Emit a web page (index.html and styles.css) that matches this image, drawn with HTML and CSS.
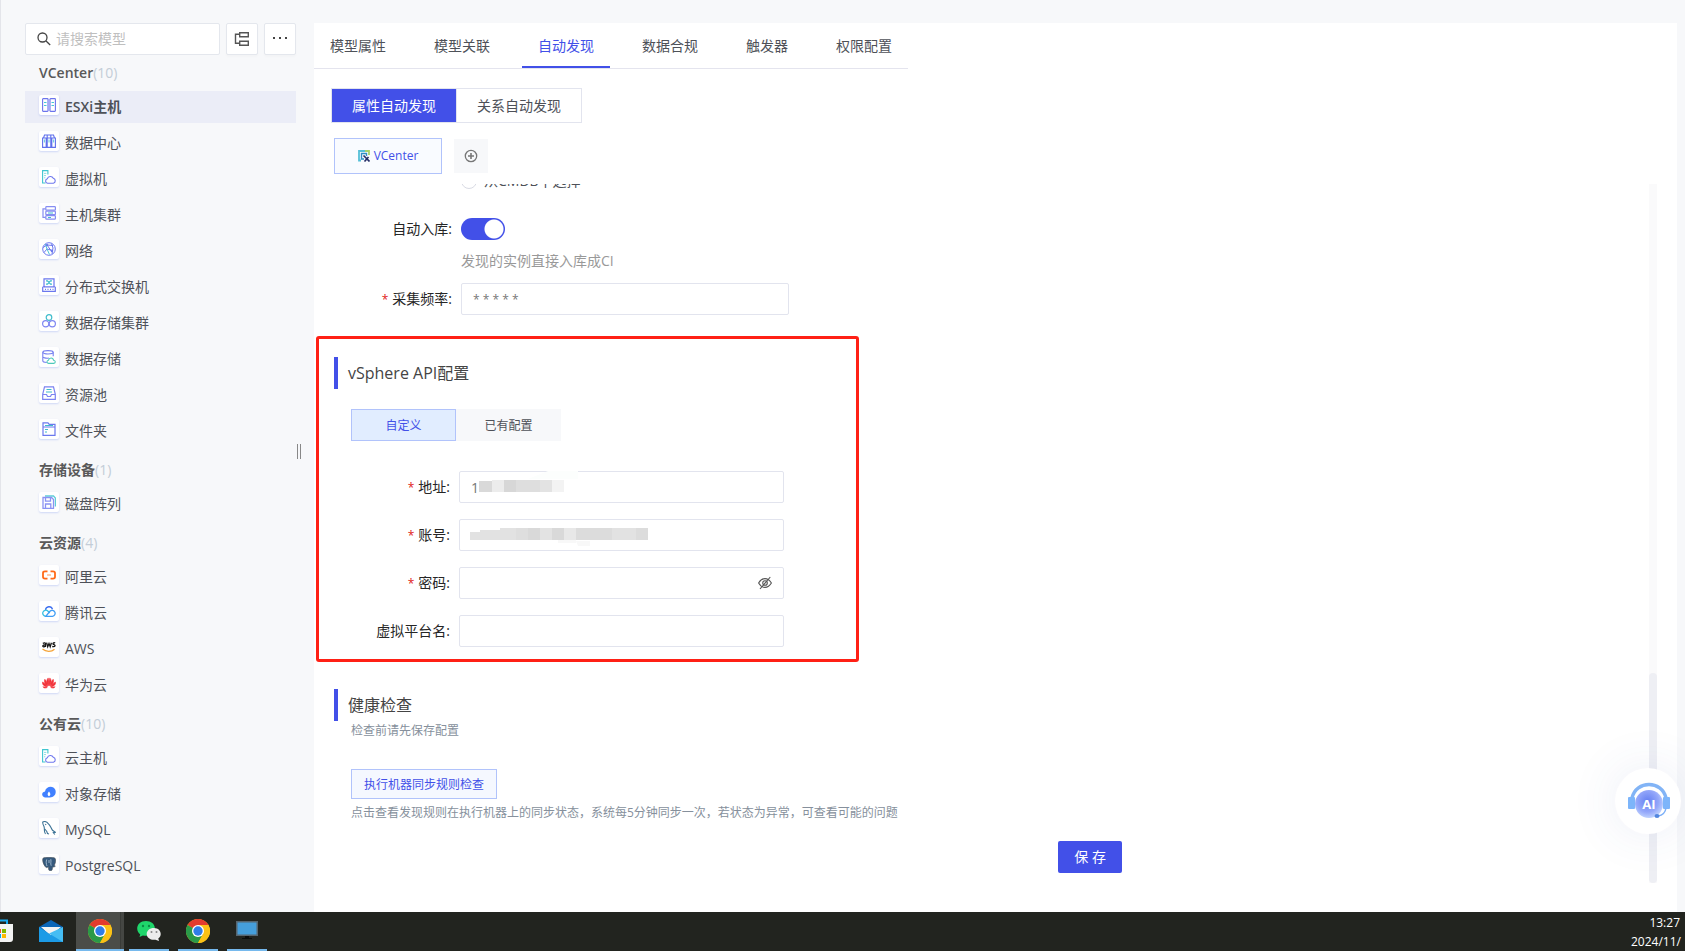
FILE: index.html
```html
<!DOCTYPE html>
<html lang="zh-CN">
<head>
<meta charset="utf-8">
<title>模型配置 - 自动发现</title>
<link rel="stylesheet" href="styles.css">
</head>
<body>
<svg class="defs" aria-hidden="true">
  <defs>
    <symbol id="cloud-host" viewBox="0 0 14 14"><path d="M3.5 13H.6V.6h5.3v4" fill="none" stroke="#3fc5d0" stroke-width="1.1"/><path d="M2 3.4h2.4M2 5.6h2M2 7.8h1.4" stroke="#8fdce2" fill="none"/><path d="M5.6 13.3a2.3 2.3 0 0 1-.3-4.5A3.2 3.2 0 0 1 11.3 8.3a2.6 2.6 0 0 1 .1 5z" fill="#fff" stroke="#6f78ee" stroke-width="1.1"/></symbol>
    <symbol id="chrome" viewBox="0 0 24 24"><circle cx="12" cy="12" r="12" fill="#fbc116"/><path d="M12 12 1.600 6A12 12 0 0 1 22.400 6z" fill="#e33b2e"/><path d="M1.600 6A12 12 0 0 0 12 24l5-9-5-3z" fill="#2a9a48"/><path d="M12 6h10.400A12 12 0 0 1 12 24l5.200-9z" fill="#fbc116"/><circle cx="12" cy="12" r="6" fill="#fff"/><circle cx="12" cy="12" r="4.700" fill="#2f7de9"/></symbol>
  </defs>
</svg>
<div class="app">
  <aside class="sidebar">
    <div class="toolbar">
      <label class="search">
        <svg width="14" height="14" viewBox="0 0 14 14" fill="none" stroke="#444" stroke-width="1.3"><circle cx="5.500" cy="5.500" r="4.500"/><path d="m8.800 8.800 4.400 4.200"/></svg>
        <input type="text" placeholder="请搜索模型" aria-label="搜索模型">
      </label>
      <button class="tool" aria-label="树形视图"><svg width="16" height="16" viewBox="0 0 16 16" fill="none" stroke="#555" stroke-width="1.400"><path d="M5.700 1.700h8.600v4H5.700zM5.700 10.200h8.600v4H5.700zM5.700 3.200H1.500v9h4.200"/></svg></button>
      <button class="tool" aria-label="更多"><svg width="16" height="16" viewBox="0 0 16 16" fill="#444"><path d="M1 6h2v2H1zM7 6h2v2H7zM13 6h2v2h-2z"/></svg></button>
    </div>
    <nav class="groups">
      <section class="group">
        <h3 class="group-title">VCenter<span>(10)</span></h3>
        <a href="#" class="item current"><i class="tile"><svg viewBox="0 0 14 14" fill="none" stroke="#6c74ec" stroke-width="1.100"><rect x=".6" y=".6" width="5.400" height="12.800" rx=".6"/><rect x="8" y=".6" width="5.400" height="12.800" rx=".6"/><path d="M7 1v12" stroke="#a3a8f5" stroke-width="2"/><path d="M2 4.500h2.500M2 7.500h2.500M9.500 4.500H12M9.500 7.500H12" stroke="#45c8d4"/></svg></i>ESXi主机</a>
        <a href="#" class="item"><i class="tile"><svg viewBox="0 0 14 14" fill="none" stroke="#5f70ec" stroke-width="1.100"><path d="M.6 4h3.600v9.400H.6zM5.200 4h3.600v9.400H5.200zM9.800 4h3.600v9.400H9.800zM1.500 4l1-3h9l1 3M5.200 4V1M8.800 4V1"/><path d="M2.400 5.500v3M7 5.500v3M11.600 5.500v3" stroke="#6bcde0"/></svg></i>数据中心</a>
        <a href="#" class="item"><i class="tile"><svg><use href="#cloud-host"/></svg></i>虚拟机</a>
        <a href="#" class="item"><i class="tile"><svg viewBox="0 0 14 14" fill="none" stroke="#858df2" stroke-width="1.200"><rect x="3.800" y=".7" width="9.600" height="3.500" rx=".8"/><rect x="3.800" y="5.200" width="9.600" height="3.500" rx=".8"/><rect x="3.800" y="9.700" width="9.600" height="3.500" rx=".8"/><path d="M3.500 2.800H1v8.500h2.500"/><path d="M6 7h5M6 11.500h3" stroke="#40bccb"/></svg></i>主机集群</a>
        <a href="#" class="item"><i class="tile"><svg viewBox="0 0 14 14" fill="none" stroke="#6b78ee" stroke-width="1"><circle cx="7" cy="7" r="6.300"/><path d="M1 5.500 5 3l6 .5M5 3l5 7M2 10.500l3-3.500 6 1.500M9.500 1.500 11 6l-1 6"/><path d="M3.500 2 5 7l2.500 5.500" stroke="#4ac3d4"/><circle cx="5" cy="3" r=".8" fill="#6b78ee"/><circle cx="10" cy="9" r=".8" fill="#6b78ee"/></svg></i>网络</a>
        <a href="#" class="item"><i class="tile"><svg viewBox="0 0 14 14" fill="none" stroke="#6b78ee" stroke-width="1.200"><path d="M2 8.500V.8h10v7.700M2 8.500l-1.300.8v4h12.600v-4L12 8.500M2 8.800h10M3 11.300h1M5.500 11.300h1M8 11.300h1M10.500 11.300h1"/><path d="M4 2.800h1.500l3 3.400H10M4 6.200h1.500l3-3.400H10" stroke="#3fbccc"/></svg></i>分布式交换机</a>
        <a href="#" class="item"><i class="tile"><svg viewBox="0 0 14 14" fill="none" stroke="#7f87f2" stroke-width="1.200"><circle cx="7" cy="3.500" r="2.800" stroke="#3fbccc"/><circle cx="3.700" cy="9.800" r="3.100"/><circle cx="10.300" cy="9.800" r="3.100"/></svg></i>数据存储集群</a>
        <a href="#" class="item"><i class="tile"><svg viewBox="0 0 14 14" fill="none" stroke="#7780f0" stroke-width="1.100"><ellipse cx="6" cy="2.300" rx="5.200" ry="1.700"/><path d="M.8 2.300v8.500c0 1 2 1.700 4 1.700M11.200 2.300v4M.8 6.500c0 1.200 3 2 6 1.600"/><path d="M6.500 13.400c-2-.1-2-3 0-3.200.6-3 4.600-3 5 0 2.300.2 2.300 3 .3 3.200z" fill="#fff" stroke="#4fcabb"/></svg></i>数据存储</a>
        <a href="#" class="item"><i class="tile"><svg viewBox="0 0 14 14" fill="none" stroke="#7b83f1" stroke-width="1.200"><path d="M.7 8.300 2.500.8h9l1.800 7.500v5H.7zM.7 8.500h3.800l1 2h3l1-2h3.800"/><path d="M4.500 3.500h5M4 6h6" stroke="#3fbccc"/></svg></i>资源池</a>
        <a href="#" class="item"><i class="tile"><svg viewBox="0 0 14 14" fill="none" stroke="#6b78ee" stroke-width="1.200"><path d="M1 .8h5l1.200 1.500H13v11H1zM1 5h12"/><path d="M3 3.500h8M3 7.500h3M3 10h2" stroke="#3fbccc"/></svg></i>文件夹</a>
      </section>
      <section class="group">
        <h3 class="group-title">存储设备<span>(1)</span></h3>
        <a href="#" class="item"><i class="tile"><svg viewBox="0 0 14 14" fill="none" stroke="#8a92f3" stroke-width="1.300"><path d="M3 1h8.500L13.400 3v8.500" stroke="#5fcbd8"/><path d="M1 2.500h8.500l2 2v8.800H1zM3.500 2.500v3.600h5V2.500M3.500 13V9h5.300v4"/></svg></i>磁盘阵列</a>
      </section>
      <section class="group">
        <h3 class="group-title">云资源<span>(4)</span></h3>
        <a href="#" class="item"><i class="tile"><svg viewBox="0 0 14 14" fill="none" stroke="#ff6a1a" stroke-width="1.800"><path d="M5.500 3.300H3Q1 3.300 1 5v3.800q0 1.800 2 1.800h2.500M8.500 3.300H11q2 0 2 1.700v3.800q0 1.800-2 1.800H8.500"/><path d="M5 7h4" stroke="#ffc6a5"/></svg></i>阿里云</a>
        <a href="#" class="item"><i class="tile"><svg viewBox="0 0 14 14" fill="none" stroke="#3f9df5" stroke-width="1.300"><path d="M3.500 6a3.600 3.600 0 0 1 7-.8" stroke="#3d6ef0"/><path d="M3.800 12.200a3 3 0 1 1 2-5.200l2 2" stroke="#35bfe0"/><path d="M3.800 12.300h6.700a3 3 0 1 0-2.600-5z"/></svg></i>腾讯云</a>
        <a href="#" class="item"><i class="tile"><svg viewBox="0 0 14 14" fill="none" stroke="#151515" stroke-width="1.300"><path d="M.8 3.300q2.700-1 2.700.7v3M3.300 5C.5 4.600.2 6.800 1.700 6.800q1 0 1.800-1M4.600 2.700l1.100 4L7 3.500l1.200 3.200 1.200-4M13.200 3c-1.500-.7-3 .3-1.700 1.400 2.500.8 1.800 2.900-1.300 2.100"/><path d="M.5 9c3.500 3 9 3 12 .2" stroke="#f5a43a"/></svg></i>AWS</a>
        <a href="#" class="item"><i class="tile"><svg viewBox="0 0 14 14" fill="#f2333a"><path d="M6.700 9.800C4.500 7 4.300 3.500 6.200 1.900c.8 1.800.9 4.700.5 7.900zM7.300 9.800c2.200-2.800 2.400-6.300.5-7.900-.8 1.800-.9 4.700-.5 7.900zM6 10.200C3 8.500 1.600 5.500 2.800 3.200 4.500 4.700 5.500 7.400 6 10.200zM8 10.200c3-1.700 4.400-4.700 3.200-7C9.500 4.700 8.500 7.400 8 10.200zM5.400 10.900C2.300 10.700 0 8.600.4 6c2 .8 3.800 2.700 5 4.900zM8.600 10.900c3.100-.2 5.400-2.300 5-4.900-2 .8-3.800 2.700-5 4.900zM5.200 11.500c-1.800 1-3.500.8-4.300-.8zM8.800 11.500c1.800 1 3.500.8 4.300-.8z" stroke="#f2333a" stroke-width=".5"/></svg></i>华为云</a>
      </section>
      <section class="group">
        <h3 class="group-title">公有云<span>(10)</span></h3>
        <a href="#" class="item"><i class="tile"><svg><use href="#cloud-host"/></svg></i>云主机</a>
        <a href="#" class="item"><i class="tile"><svg viewBox="0 0 14 14"><path d="M3 12.400C-.6 12-1 7 3 6.400 4 1 11.500.3 13.300 4.800c1.500 4-1.300 7.600-5.300 7.600z" fill="#4080ff"/><path d="M7 6.500c-2 2.300-1.500 4 0 4.700 1.600-.7 2-2.400 0-4.700z" fill="#fff"/></svg></i>对象存储</a>
        <a href="#" class="item"><i class="tile"><svg viewBox="0 0 14 14" fill="none" stroke="#3d7396" stroke-width="1.100"><path d="M3.500 13C1.500 10.500 3 8.500 2 5.500 1 3.500.4 2 .8 1 3-.2 5 1 6.500 2.800c2 2 2.500 4.500 4 6.500l2.800 2-2 .4 1.500 1.800M3.300 3l.8 1M2.800 8l2 2.500.7 2 1.500.5"/></svg></i>MySQL</a>
        <a href="#" class="item"><i class="tile"><svg viewBox="0 0 14 14"><path d="M1 1.200C3-.2 11-.2 13 1.200c1.400 2 .4 5-.8 7.300l1.200.5c-.7 1-1.700 1.200-2.800 1-.3 2 0 3.600-2 3.800-1.800.2-2.200-1-2.200-4-1.300 1.200-2.500 1-3.200-.2C1.200 7 0 3 1 1.200z" fill="#35597c" stroke="#4a5158" stroke-width=".6"/><path d="M4.700 2.500c-.8 2-.6 4.500.3 6.500M8.800 2.200c.6 3-.6 4 .4 6.500M7 3v3" fill="none" stroke="#a9c0d4" stroke-width=".9"/></svg></i>PostgreSQL</a>
      </section>
    </nav>
    <div class="splitter" role="separator" aria-orientation="vertical"></div>
  </aside>

  <main class="panel">
    <nav class="tabs">
      <a href="#">模型属性</a><a href="#">模型关联</a><a href="#" class="active">自动发现</a><a href="#">数据合规</a><a href="#">触发器</a><a href="#">权限配置</a>
    </nav>
    <div class="segment">
      <button class="on">属性自动发现</button><button>关系自动发现</button>
    </div>
    <div class="sources">
      <button class="source"><svg width="12" height="12" viewBox="0 0 12 12" fill="none"><path d="M3 10.500H1V1h7" stroke="#55bfd8" stroke-width="1.800"/><path d="M7 1h4v4" stroke="#a7d36c" stroke-width="1.800"/><path d="M6 9H3.500V3.500h5V6" stroke="#2f8fc4" stroke-width="1.400"/><path d="m5.500 5.500 6 6M10.500 7l-4 4.500" stroke="#232c66" stroke-width="1.600"/></svg>VCenter</button>
      <button class="add" aria-label="新增"><svg width="14" height="14" viewBox="0 0 14 14" fill="none" stroke="#777"><circle cx="7" cy="7" r="5.700" stroke-width="1.300"/><path d="M7 4v6M4 7h6" stroke-width="1.600"/></svg></button>
    </div>

    <div class="scroll">
      <form class="content">
        <div class="row first">
          <span></span>
          <label class="radio"><input type="radio" name="target">从CMDB中选择</label>
        </div>
        <div class="row switch-row">
          <label class="name" for="auto">自动入库:</label>
          <input class="switch" type="checkbox" id="auto" checked>
        </div>
        <div class="row hint-row"><span></span><p class="hint">发现的实例直接入库成CI</p></div>
        <div class="row freq-row">
          <label class="name required" for="freq">采集频率:</label>
          <input class="field cron" id="freq" type="text" value="* * * * *">
        </div>

        <section class="section api">
          <h2>vSphere API配置</h2>
          <div class="modes"><button type="button" class="on">自定义</button><button type="button">已有配置</button></div>
          <div class="fields">
            <div class="row"><label class="name required" for="host">地址:</label>
              <div class="wrap"><input class="field" id="host" type="text" value="1">
                <svg class="mask" width="120" height="32" viewBox="0 0 120 32"><path d="M89 0h30v8H69z" fill="#fcfefd"/><path d="M20 10h13v11H20z" fill="#d9d9d9"/><path d="M33 9h12v12H33z" fill="#ececec"/><path d="M45 9h12v12H45z" fill="#d7d7d7"/><path d="M57 9h24v12H57z" fill="#dedede"/><path d="M81 9h12v12H81z" fill="#e3e3e3"/><path d="M93 9h12v12H93z" fill="#f3f3f3"/></svg></div></div>
            <div class="row"><label class="name required" for="user">账号:</label>
              <div class="wrap"><input class="field" id="user" type="text">
                <svg class="mask" width="200" height="32" viewBox="0 0 200 32"><path d="M11 13h10v-2h20V9h16v12H11z" fill="#e2e2e2"/><path d="M57 9h12v12H57z" fill="#dedede"/><path d="M69 9h12v12H69z" fill="#d9d9d9"/><path d="M81 9h12v12H81z" fill="#e3e3e3"/><path d="M93 9h12v12H93z" fill="#d9d9d9"/><path d="M105 9h12v12h-12z" fill="#e8e8e8"/><path d="M117 9h36v12h-36z" fill="#dcdcdc"/><path d="M153 9h24v12h-24z" fill="#e2e2e2"/><path d="M177 9h12v12h-12z" fill="#dcdcdc"/><path d="M99 21h18v3H99zM117 22h14v5h-12z" fill="#f8f8f8"/></svg></div></div>
            <div class="row"><label class="name required" for="pass">密码:</label>
              <div class="wrap"><input class="field" id="pass" type="password">
                <button type="button" class="eye" aria-label="显示密码"><svg width="14" height="14" viewBox="0 0 14 14" fill="none" stroke="#555" stroke-width="1.100"><path d="M.6 7Q3.200 2.600 7 2.600T13.400 7Q10.800 11.400 7 11.400T.6 7z"/><circle cx="7" cy="7" r="2.300"/><path d="M12.300 1 2 13"/></svg></button></div></div>
            <div class="row"><label class="name" for="platform">虚拟平台名:</label>
              <div class="wrap"><input class="field" id="platform" type="text"></div></div>
          </div>
          <div class="callout"></div>
        </section>

        <section class="section">
          <h2>健康检查</h2>
          <p class="note">检查前请先保存配置</p>
          <button type="button" class="check">执行机器同步规则检查</button>
          <p class="note">点击查看发现规则在执行机器上的同步状态，系统每5分钟同步一次，若状态为异常，可查看可能的问题</p>
        </section>
        <div class="actions"><button class="save">保 存</button></div>
      </form>
      <div class="track"><div class="thumb"></div></div>
    </div>
  </main>

  <button class="assistant" aria-label="AI 助手">
    <svg width="44" height="44" viewBox="0 0 44 44">
      <defs><radialGradient id="orb" cx=".45" cy=".4" r=".65"><stop offset="0" stop-color="#6580f2"/><stop offset=".6" stop-color="#94a7fa"/><stop offset="1" stop-color="#c9dcff"/></radialGradient></defs>
      <circle cx="23" cy="25" r="14" fill="url(#orb)"/>
      <path d="M6 19C10 1 36 1 40 19" fill="none" stroke="#82b4f6" stroke-width="3.500"/>
      <rect x="2" y="18" width="7" height="12" rx="1" fill="#7db5fa"/><rect x="37" y="18" width="7" height="12" rx="1" fill="#7db5fa"/>
      <path d="M40 29q-1 7-8 8" fill="none" stroke="#7db0f8" stroke-width="1.500"/><ellipse cx="31" cy="37" rx="2.500" ry="2" fill="#5387df"/>
      <text x="23" y="30" text-anchor="middle" class="ai-text">AI</text>
    </svg>
  </button>
</div>

<footer class="taskbar">
  <button class="task store" aria-label="应用商店"><svg width="13" height="24" viewBox="0 0 13 24"><path d="M0 1.500h7V7" fill="none" stroke="#19a7ee" stroke-width="2"/><path d="M0 5h13v15q0 3-3 3H0z" fill="#f3f3f3"/><path d="M2 10h4v4H2z" fill="#7fba00"/><path d="M0 10h1v4H0z" fill="#f25022"/><path d="M2 15h4v4H2z" fill="#ffb900"/><path d="M0 15h1v4H0z" fill="#00a4ef"/></svg></button>
  <button class="task mail" aria-label="邮件"><svg width="24" height="24" viewBox="0 0 24 24"><path d="M0 8 12 1l12 7v6H0z" fill="#0b66b8"/><path d="M2 8h20l-10 9z" fill="#f3f3f3"/><path d="M0 8l12 8 12-8v15H0z" fill="#1c9be6"/><path d="M24 8v15L10 14.500z" fill="#45bdf3"/></svg></button>
  <button class="task open focus" aria-label="Chrome"><svg width="24" height="24"><use href="#chrome"/></svg></button>
  <button class="task open" aria-label="微信"><svg width="24" height="24" viewBox="0 0 24 24"><path d="M9 2C3.500 2 .2 5.500.2 9.500c0 2.500 1.200 4.500 3 5.700L2.500 18l3.400-1.600c5 1.600 12-1 12-7C17.900 5 14 2 9 2z" fill="#1fd66b"/><circle cx="6" cy="7" r="1.200" fill="#0b8f45"/><circle cx="12" cy="7" r="1.200" fill="#0b8f45"/><path d="M17 9c-4.500 0-7.300 2.700-7.300 6s3.300 6.400 8.800 5.800L22 22l-.7-2.500C26 16 23.500 9 17 9z" fill="#ececec"/><circle cx="14.500" cy="13" r="1" fill="#888"/><circle cx="19.500" cy="13" r="1" fill="#888"/></svg></button>
  <button class="task open" aria-label="Chrome"><svg width="24" height="24"><use href="#chrome"/></svg></button>
  <button class="task open" aria-label="远程桌面"><svg width="24" height="24" viewBox="0 0 24 24"><path d="M1 2h22v15H1z" fill="#56656f"/><path d="M2.500 3.500h19v12h-19z" fill="#459edb"/><path d="M10 17h4v2h3v1H7v-1h3z" fill="#0c0d0c"/></svg></button>
  <div class="clock"><time>13:27</time><span>2024/11/</span></div>
</footer>
</body>
</html>
```
FILE: styles.css
```css
* { box-sizing: border-box; }
body {
  margin: 0;
  height: 100vh;
  display: flex;
  flex-direction: column;
  overflow: hidden;
  background: #f7f8fa;
  color: #4e5158;
  font: 14px/22px "Open Sans", "Noto Sans CJK SC", sans-serif;
}
button, input { font: inherit; color: inherit; margin: 0; }
button { cursor: pointer; padding: 0; border: 0; background: none; }
a { color: inherit; text-decoration: none; }
p, h2, h3 { margin: 0; }
.defs { position: absolute; width: 0; height: 0; }

.app { flex: 1; min-height: 0; display: flex; padding-right: 8px; position: relative; border-left: 1px solid #e4e5ea; }

/* Sidebar */
.sidebar { flex: none; width: 313px; padding: 23px 18px 0 24px; position: relative; }
.toolbar { display: flex; gap: 6px; }
.search {
  flex: 1; min-width: 0; height: 32px; display: flex; align-items: center; gap: 5px;
  padding: 0 11px; background: #fff; border: 1px solid #e4e7ed; border-radius: 2px;
}
.search input { flex: 1; min-width: 0; border: 0; outline: 0; padding: 0; background: none; }
.search input::placeholder { color: #bfbfbf; }
.tool {
  width: 32px; height: 32px; display: grid; place-items: center; background: #fff;
  border: 1px solid #e4e7ed; border-radius: 2px; box-shadow: 0 2px 2px rgba(0, 0, 0, .02);
}
.groups { display: flex; flex-direction: column; gap: 5px; }
.group { display: flex; flex-direction: column; gap: 4px; }
.group-title { height: 32px; padding: 7px 0 0 14px; font-size: 14px; line-height: 22px; font-weight: 600; color: #595959; }
.group-title span { color: #c3cdd7; font-weight: 400; }
.item { height: 32px; padding-left: 14px; display: flex; align-items: center; gap: 6px; }
.item.current { background: #ebedf7; font-weight: 600; }
.tile {
  width: 20px; height: 20px; margin-bottom: 4px; display: grid; place-items: center; background: #fff;
  border-radius: 2px; box-shadow: 0 1px 2px rgba(47, 84, 235, .2);
}
.tile svg { width: 14px; height: 14px; }
.splitter {
  position: absolute; right: 13px; top: 444px; width: 4px; height: 15px;
  border: solid #888; border-width: 0 1px;
}

/* Main panel */
.panel { flex: 1; min-width: 0; margin-top: 23px; background: #fff; display: flex; flex-direction: column; }
.tabs { align-self: flex-start; display: flex; gap: 16px; border-bottom: 1px solid #e4e4ee; }
.tabs a { height: 45px; padding: 12px 16px 0; }
.tabs .active { color: #4250e8; border-bottom: 2px solid #4250e8; }
.segment { align-self: flex-start; margin: 19px 0 0 17px; display: flex; border: 1px solid #e2e4ee; }
.segment button { height: 33px; padding: 0 20px; }
.segment .on { background: #4250e8; color: #fff; }
.segment button + button { border-left: 1px solid #e2e4ee; }
.sources { display: flex; align-items: center; gap: 12px; margin: 15px 0 0 20px; }
.source {
  width: 108px; height: 36px; display: flex; align-items: center; justify-content: center; gap: 4px;
  border: 1px solid #b1c3fb; background: #f9fbff; color: #4250e8; font-size: 12px;
}
.add { width: 34px; height: 34px; display: grid; place-items: center; background: #f7f8fa; }

.scroll { flex: 1; min-height: 0; margin-top: 10px; display: flex; overflow: hidden; }
.content { flex: 1; min-width: 0; padding-left: 20px; }
.row { display: grid; grid-template-columns: 127px minmax(0, 328px); align-items: center; }
.first { margin-top: -14px; }
.radio { display: flex; align-items: center; gap: 7px; }
.radio input { appearance: none; width: 16px; height: 16px; border: 1px solid #d9dbe4; border-radius: 50%; }
.name { padding-right: 9px; text-align: right; color: #262626; }
.required::before { content: "*"; color: #e02020; font-size: 12px; margin-right: 4px; }
.switch-row { margin-top: 26px; }
.switch {
  appearance: none; width: 44px; height: 22px; border-radius: 11px;
  background: radial-gradient(circle at 33px 11px, #fff 9px, #4250e8 10px);
}
.hint-row { margin-top: 10px; }
.hint { color: #999; }
.freq-row { margin-top: 11px; }
.field { display: block; width: 100%; height: 32px; padding: 0 11px; border: 1px solid #e2e4ee; border-radius: 2px; outline: 0; background: #fff; color: #777; }
.cron { font-size: 12px; }

.section { margin-top: 42px; }
.section h2 { height: 32px; padding-left: 10px; border-left: 4px solid #4250e8; font-size: 16px; line-height: 32px; font-weight: 400; color: #444; }
.api { position: relative; max-width: 525px; }
.modes { display: flex; margin: 20px 0 0 17px; }
.modes button { width: 105px; height: 32px; padding-top: 2px; font-size: 12px; background: #f7f8fa; }
.modes .on { background: #e1edff; border: 1px solid #b1c3fb; color: #4250e8; }
.fields { margin-top: 30px; display: flex; flex-direction: column; gap: 16px; }
.fields .row { grid-template-columns: 125px minmax(0, 325px); }
.wrap { position: relative; }
.mask { position: absolute; left: 0; top: 0; }
.eye { position: absolute; right: 12px; top: 9px; width: 14px; height: 14px; display: grid; }
.callout { position: absolute; inset: -21px 0 -15px -18px; border: 3px solid #ff2015; border-radius: 3px; pointer-events: none; }

.note { padding-left: 17px; font-size: 12px; line-height: 20px; color: #86909c; }
.check { height: 30px; margin: 28px 0 4px 17px; padding: 2px 12px 0; font-size: 12px; border: 1px solid #b1c3fb; background: #f5f8ff; color: #4250e8; }
.actions { margin-top: 18px; padding-left: 15%; display: flex; justify-content: center; }
.save { width: 64px; height: 32px; border-radius: 2px; background: #4250e8; color: #fff; }
.track { flex: none; width: 8px; margin: 0 20px 29px 0; background: #fafafb; display: flex; flex-direction: column; justify-content: flex-end; }
.thumb { height: 30%; border-radius: 4px; background: #eeeff4; }

.assistant {
  position: absolute; right: 4px; bottom: 78px; width: 66px; height: 66px; border-radius: 50%;
  display: grid; place-items: center; background: #fff; box-shadow: 0 0 50px rgba(60, 80, 170, .1);
}
.ai-text { font: 700 13px "Open Sans", sans-serif; fill: #fff; }

/* Taskbar */
.taskbar { flex: none; height: 39px; display: flex; background: #22241f; overflow: hidden; }
.task { width: 40px; margin-right: 9px; padding-top: 1px; display: grid; place-items: center; border-bottom: 2px solid transparent; }
.store { width: 13px; margin-right: 16px; }
.mail { width: 44px; margin-right: 3px; }
.open { border-bottom-color: #76b9ed; }
.focus { width: 48px; margin-right: 5px; background: linear-gradient(90deg, #4b4d49 44px, #3a3c38 44px, #3a3c38 45px, #454743 45px); }
.clock { margin-left: auto; width: 54px; padding-top: 1px; display: flex; flex-direction: column; font-size: 12px; line-height: 19px; color: #fff; white-space: nowrap; }
.clock time { padding-right: 5px; text-align: right; }
```
